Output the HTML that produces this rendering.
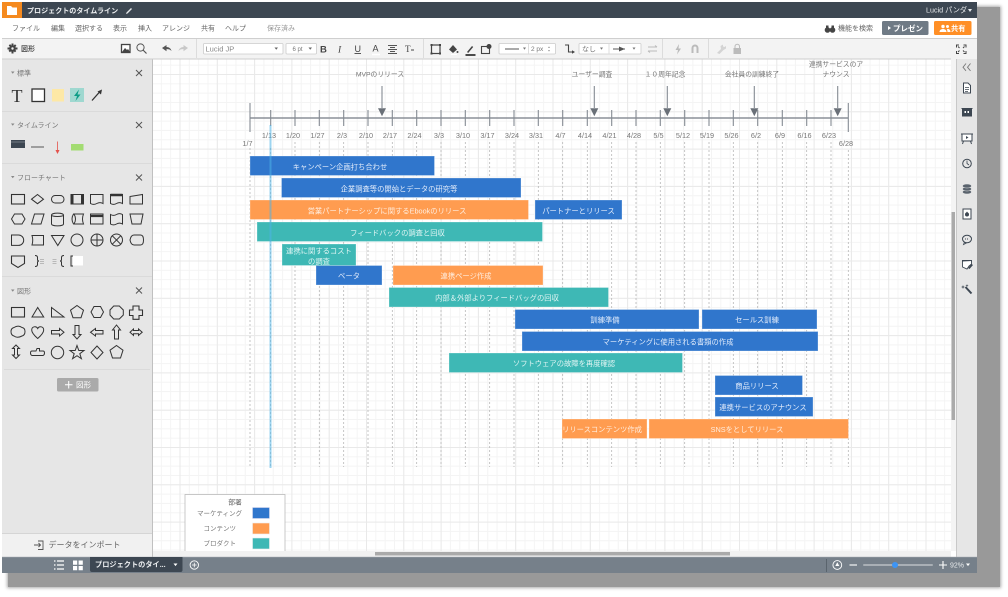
<!DOCTYPE html>
<html><head><meta charset="utf-8"><style>
html,body{margin:0;padding:0;background:#fff;width:1008px;height:597px;overflow:hidden}
#s{position:absolute;left:8px;top:7px;width:992px;height:580px;background:#999;box-shadow:0 0 3px 1px #aaa}
svg{position:absolute;left:0;top:0;filter:blur(.3px)}
text{font-family:"Liberation Sans","Noto Sans CJK JP",sans-serif;font-size:7.3px;fill:#777}
.ml{font-size:6.8px}
.m{font-size:7px;fill:#666}
.b text,.b{fill:#fff;text-anchor:middle;fill-opacity:.92}
.c{text-anchor:middle}
.h{font-size:7px;fill:#777}
.d{fill:none;stroke:#333;stroke-width:1}
.t{fill:none;stroke:#444;stroke-width:1.1}
.x{stroke:#555;stroke-width:1;fill:none}
</style></head><body>
<div id="s"></div>
<svg width="1008" height="597" viewBox="0 0 1008 597" xmlns="http://www.w3.org/2000/svg">
<defs>
<pattern id="mi" width="9.325" height="9.325" patternUnits="userSpaceOnUse" x="179.5" y="111.3"><path d="M.5 0V9.4M0 .5H9.4" stroke="#f4f4f4" stroke-width="1" fill="none"/></pattern>
<pattern id="ma" width="37.3" height="37.3" patternUnits="userSpaceOnUse" x="179.5" y="111.3"><path d="M.5 0V37.3M0 .5H37.3" stroke="#e9e9e9" stroke-width="1" fill="none"/></pattern>
</defs>
<rect x="2" y="2" width="975" height="571" fill="#fff"/>
<rect x="153" y="59" width="803" height="498" fill="url(#mi)"/>
<rect x="153" y="59" width="803" height="498" fill="url(#ma)"/>

<g stroke="#b2b2b2" stroke-width=".75" stroke-dasharray="2 2">
<path d="M250 148V467M270.7 148V467M295 142V467M319.3 142V467M343.7 142V467M368 142V467M392.3 142V467M416.7 142V467M441 142V467M465.3 142V467M489.7 142V467M514 142V467M538.3 142V467M562.7 142V467M587.3 142V467M611.7 142V467M636 142V467M660.3 142V467M684.7 142V467M709 142V467M733.3 142V467M757.7 142V467M782.3 142V467M806.7 142V467M831 142V467M848.3 150V467"/>
</g>

<g stroke="#858b93" stroke-width="1.1">
<path d="M250 118H848" stroke-width="1.5" stroke="#8b9098"/>
<path d="M250 103V132M848.3 103V132"/>
<path d="M270.7 110V126M295 110V126M319.3 110V126M343.7 110V126M368 110V126M392.3 110V126M416.7 110V126M441 110V126M465.3 110V126M489.7 110V126M514 110V126M538.3 110V126M562.7 110V126M587.3 110V126M611.7 110V126M636 110V126M660.3 110V126M684.7 110V126M709 110V126M733.3 110V126M757.7 110V126M782.3 110V126M806.7 110V126M831 110V126"/>
<path d="M382 86V108M594.3 86V108M667.3 86V108M754.3 86V108M837.7 86V108"/>
</g>
<g fill="#6a7078">
<path d="M378 108.300h8l-4 8z"/><path d="M590.300 108.300h8l-4 8z"/><path d="M663.300 108.300h8l-4 8z"/><path d="M750.300 108.300h8l-4 8z"/><path d="M833.700 108.300h8l-4 8z"/>
</g>
<g class="c" style="text-anchor:middle">
<text class="ml" x="380" y="76.500" text-anchor="middle">MVPのリリース</text>
<text class="ml" x="592" y="76.500" text-anchor="middle">ユーザー調査</text>
<text class="ml" x="665" y="76.500" text-anchor="middle">１０周年記念</text>
<text class="ml" x="752" y="76.500" text-anchor="middle">会社員の訓練終了</text>
<text class="ml" x="836" y="66.500" text-anchor="middle">連携サービスのア</text>
<text class="ml" x="836" y="76.500" text-anchor="middle">ナウンス</text>
<text x="247.500" y="146" text-anchor="middle">1/7</text>
<text x="269" y="138" text-anchor="middle">1/13</text>
<text x="293" y="138" text-anchor="middle">1/20</text>
<text x="317.500" y="138" text-anchor="middle">1/27</text>
<text x="342" y="138" text-anchor="middle">2/3</text>
<text x="366" y="138" text-anchor="middle">2/10</text>
<text x="390" y="138" text-anchor="middle">2/17</text>
<text x="414.500" y="138" text-anchor="middle">2/24</text>
<text x="439" y="138" text-anchor="middle">3/3</text>
<text x="463" y="138" text-anchor="middle">3/10</text>
<text x="487.500" y="138" text-anchor="middle">3/17</text>
<text x="512" y="138" text-anchor="middle">3/24</text>
<text x="536" y="138" text-anchor="middle">3/31</text>
<text x="560.500" y="138" text-anchor="middle">4/7</text>
<text x="585" y="138" text-anchor="middle">4/14</text>
<text x="609.500" y="138" text-anchor="middle">4/21</text>
<text x="634" y="138" text-anchor="middle">4/28</text>
<text x="658.500" y="138" text-anchor="middle">5/5</text>
<text x="683" y="138" text-anchor="middle">5/12</text>
<text x="707" y="138" text-anchor="middle">5/19</text>
<text x="731.500" y="138" text-anchor="middle">5/26</text>
<text x="756" y="138" text-anchor="middle">6/2</text>
<text x="780" y="138" text-anchor="middle">6/9</text>
<text x="804.500" y="138" text-anchor="middle">6/16</text>
<text x="829" y="138" text-anchor="middle">6/23</text>
<text x="846" y="146" text-anchor="middle">6/28</text>
</g>

<g stroke="#fff" stroke-opacity=".35" stroke-width=".8">
<g fill="#3076cc">
<rect x="250" y="156" width="184.500" height="19.500"/>
<rect x="281.500" y="178" width="239.500" height="19.500"/>
<rect x="535" y="200" width="87" height="19.500"/>
<rect x="316" y="265.500" width="66" height="19.500"/>
<rect x="515" y="309.500" width="184" height="19.500"/>
<rect x="702" y="309.500" width="115" height="19.500"/>
<rect x="522" y="331.500" width="296" height="19.500"/>
<rect x="715" y="375.500" width="87.500" height="19.500"/>
<rect x="715" y="397" width="98" height="19.500"/>
</g>
<g fill="#ff9c50">
<rect x="250" y="200" width="278.500" height="19.500"/>
<rect x="393" y="265.500" width="150" height="19.500"/>
<rect x="562" y="419" width="85" height="19.500"/>
<rect x="649" y="419" width="199.500" height="19.500"/>
</g>
<g fill="#3eb8b5">
<rect x="257" y="222" width="285.500" height="19.500"/>
<rect x="282" y="244" width="74" height="21.500"/>
<rect x="389" y="287.500" width="219.500" height="19.500"/>
<rect x="449" y="353" width="233.500" height="19.500"/>
</g>
</g>
<g class="b" fill="#fff">
<text x="340" y="169.500" text-anchor="middle" style="fill:#f2f6ff">キャンペーン企画打ち合わせ</text>
<text x="399" y="191.500" text-anchor="middle" style="fill:#f2f6ff">企業調査等の開始とデータの研究等</text>
<text x="387" y="213.500" text-anchor="middle" style="fill:#fff4ea">営業パートナーシップに関するEbookのリリース</text>
<text x="578.500" y="213.500" text-anchor="middle" style="fill:#f2f6ff">パートナーとリリース</text>
<text x="397.500" y="235.500" text-anchor="middle" style="fill:#eefaf9">フィードバックの調査と回収</text>
<text x="319" y="253.500" text-anchor="middle" style="fill:#eefaf9">連携に関するコスト</text>
<text x="319" y="264" text-anchor="middle" style="fill:#eefaf9">の調査</text>
<text x="349" y="278.500" text-anchor="middle" style="fill:#f2f6ff">ベータ</text>
<text x="466" y="278.500" text-anchor="middle" style="fill:#fff4ea">連携ページ作成</text>
<text x="497" y="300.500" text-anchor="middle" style="fill:#eefaf9">内部＆外部よりフィードバッグの回収</text>
<text x="605" y="322.500" text-anchor="middle" style="fill:#f2f6ff">訓練準備</text>
<text x="757" y="322.500" text-anchor="middle" style="fill:#f2f6ff">セールス訓練</text>
<text x="668" y="344.500" text-anchor="middle" style="fill:#f2f6ff">マーケティングに使用される書類の作成</text>
<text x="564" y="366" text-anchor="middle" style="fill:#eefaf9">ソフトウェアの故障を再度確認</text>
<text x="757" y="388.500" text-anchor="middle" style="fill:#f2f6ff">商品リリース</text>
<text x="763" y="410" text-anchor="middle" style="fill:#f2f6ff">連携サービスのアナウンス</text>
<text x="602" y="432" text-anchor="middle" style="fill:#fff4ea">リリースコンテンツ作成</text>
<text x="747" y="432" text-anchor="middle" style="fill:#fff4ea">SNSをとしてリリース</text>
</g>
<rect x="269.500" y="125" width="2" height="343" fill="#4db2e6" fill-opacity=".55"/>

<!-- legend -->
<rect x="185" y="494.500" width="100" height="70" fill="#fff" stroke="#bbb" stroke-width=".8"/>
<text x="235" y="504.500" text-anchor="middle" style="fill:#666;font-size:6.800px">部署</text>
<text x="242" y="515.500" text-anchor="end" style="font-size:6.500px">マーケティング</text>
<text x="236" y="530.500" text-anchor="end" style="font-size:6.500px">コンテンツ</text>
<text x="236" y="545.500" text-anchor="end" style="font-size:6.500px">プロダクト</text>
<rect x="252.500" y="507.500" width="17" height="11" fill="#3076cc" stroke="#dde" stroke-width=".6"/>
<rect x="252.500" y="523" width="17" height="11" fill="#ff9c50" stroke="#eee" stroke-width=".6"/>
<rect x="252.500" y="538" width="17" height="11" fill="#3eb8b5" stroke="#eee" stroke-width=".6"/>

<!-- scrollbars -->
<rect x="153" y="551" width="798" height="6" fill="#f1f1f1"/>
<rect x="375" y="552" width="355" height="3.500" fill="#aaa"/>
<rect x="951" y="59" width="5" height="498" fill="#f4f4f4"/>
<rect x="951.500" y="212" width="3.500" height="208" fill="#aaa"/>
<rect x="951" y="551" width="5" height="6" fill="#fff"/>

<!-- right panel -->
<rect x="956" y="59" width="21" height="498" fill="#e6e6e6"/>
<path d="M956.500 59V557" stroke="#c8c8c8"/>

<!-- left panel -->
<rect x="2" y="59" width="150.500" height="474" fill="#e6e6e6"/>
<rect x="2" y="533" width="150.500" height="24" fill="#f1f1f1"/>
<path d="M2 533.500H152.500" stroke="#d5d5d5"/>
<path d="M152.500 38V557" stroke="#c0c0c0"/>
<path d="M2 111.500H152M2 163.500H152M2 276.500H152M4 369.500H150" stroke="#dadada"/>

<!-- top bars -->
<rect x="2" y="2" width="975" height="16" fill="#3d4752"/>
<rect x="2" y="2" width="20" height="16" fill="#f58a1f"/>
<path d="M7 6h4l1.500 1.500H17v7.500H7z" fill="#fff"/>
<text x="27" y="12.800" style="fill:#eef0f2;font-size:7.050px;font-weight:700">プロジェクトのタイムライン</text>
<path d="M126.500 12.500l4.500-4.500 1 1-4.500 4.500-1.500.500z" fill="#e6e8ea"/>
<text x="926" y="12.500" style="fill:#e8eaec;font-size:7.200px">Lucid パンダ</text>
<path d="M968 9h4l-2 3z" fill="#e8eaec"/>

<rect x="2" y="18" width="975" height="20" fill="#fff"/>
<text class="m" x="12" y="30.500">ファイル</text>
<text class="m" x="51" y="30.500">編集</text>
<text class="m" x="75" y="30.500">選択する</text>
<text class="m" x="113" y="30.500">表示</text>
<text class="m" x="138" y="30.500">挿入</text>
<text class="m" x="162" y="30.500">アレンジ</text>
<text class="m" x="201" y="30.500">共有</text>
<text class="m" x="225" y="30.500">ヘルプ</text>
<text class="m" x="267" y="30.500" style="fill:#999">保存済み</text>
<!-- binoculars -->
<g fill="#444"><circle cx="827.500" cy="30" r="2.800"/><circle cx="832.500" cy="30" r="2.800"/><rect x="826" y="25.500" width="2.500" height="3"/><rect x="831.500" y="25.500" width="2.500" height="3"/></g>
<text class="m" x="838" y="30.500" style="fill:#666">機能を検索</text>
<rect x="882" y="21" width="46.500" height="14" rx="1.500" fill="#6f7a85"/>
<path d="M888 26l3 2-3 2z" fill="#fff"/>
<text x="893" y="31" style="fill:#fff;font-size:7.500px;font-weight:700">プレゼン</text>
<rect x="934" y="21" width="37.500" height="14" rx="1.500" fill="#ff8f26"/>
<g fill="#fff"><circle cx="943" cy="26.500" r="1.700"/><path d="M939.500 32c0-4 7-4 7 0z"/><circle cx="947.500" cy="26.500" r="1.500"/><path d="M947 29c2-.5 3.500 1 3.500 3h-3z"/></g>
<text x="951" y="31" style="fill:#fff;font-size:7.200px;font-weight:700">共有</text>

<!-- toolbar -->
<rect x="2" y="38" width="975" height="21" fill="#f3f3f3"/>
<path d="M2 38.500H977" stroke="#cfcfcf"/><path d="M2 59H951" stroke="#cdcdcd"/>
<path d="M196.500 39V58M423.500 39V58M662.500 39V58M708.500 39V58" stroke="#dcdcdc"/>
<!-- panel header -->
<g fill="#444"><circle cx="12.500" cy="48.500" r="3.300"/><path d="M11.500 43.500h2v10h-2zM7.500 47.500h10v2h-10z"/><path d="M8.700 45.500l1.400-1.400 6.200 6.900-1.400 1.400zM15 44.300l1.400 1.400-6.500 6.500-1.400-1.400z"/></g>
<circle cx="12.500" cy="48.500" r="1.200" fill="#f3f3f3"/>
<text x="21" y="51" style="fill:#555;font-size:7px;font-weight:700">図形</text>
<rect x="121.500" y="44.500" width="8.500" height="8" fill="#fff" stroke="#444" stroke-width="1.300"/>
<path d="M122 52l3-4 2 2 1-1 2 3z" fill="#444"/>
<circle cx="140.500" cy="47.500" r="3.600" fill="none" stroke="#555" stroke-width="1"/><path d="M143 50l3.500 3.500" stroke="#555" stroke-width="1.200"/>
<!-- undo redo -->
<path d="M162 48l4.500-3v2c2.500 0 4.500 1.500 5 4-1.500-1.500-3-2-5-1.800v2z" fill="#555"/>
<path d="M188 48l-4.500-3v2c-2.500 0-4.500 1.500-5 4 1.500-1.500 3-2 5-1.800v2z" fill="#c8c8c8"/>
<!-- font selects -->
<rect x="203.500" y="43.500" width="79.500" height="10.500" rx="1" fill="#fff" stroke="#ccc" stroke-width=".8"/>
<text x="205.500" y="51.500" style="fill:#888;font-size:7.500px">Lucid JP</text>
<path d="M274.500 47.500h3.500l-1.750 2.300z" fill="#666"/>
<rect x="286" y="43.500" width="30.500" height="10.500" rx="1" fill="#fff" stroke="#ccc" stroke-width=".8"/>
<text x="292.500" y="51" style="fill:#777;font-size:6px">6 pt</text>
<path d="M308.500 47.500h3.500l-1.750 2.300z" fill="#666"/>
<text x="320" y="52.500" style="fill:#444;font-size:9.500px;font-weight:700">B</text>
<text x="338" y="52.500" style="fill:#444;font-size:9.500px;font-family:'Liberation Serif',serif;font-style:italic">I</text>
<text x="354.500" y="52" style="fill:#444;font-size:9px;text-decoration:underline">U</text>
<text x="372.500" y="51.500" style="fill:#444;font-size:9px">A</text>
<path d="M372 54.500h8" stroke="#fff" stroke-width="1.500"/>
<path d="M388 45.500h9M390 47.500h5M388 49.500h9M390 51.500h5M388 53.500h9" stroke="#555" stroke-width=".9"/>
<text x="405" y="52" style="fill:#444;font-size:9px;font-family:'Liberation Serif',serif">T</text><path d="M411 50h3" stroke="#444"/>
<rect x="431.500" y="45" width="8.500" height="8.500" fill="none" stroke="#444" stroke-width="1.200"/>
<path d="M430.500 44h2v2h-2zM439 44h2v2h-2zM430.500 52.500h2v2h-2zM439 52.500h2v2h-2z" fill="#444"/>
<path d="M449 49.500l4-4.500 4 4.500-4 3.500z" fill="#444"/><circle cx="457.500" cy="52" r="1" fill="#444"/><path d="M451 54.500h6" stroke="#fff" stroke-width="1"/>
<path d="M467 52l5-6 1.200 1-5 6z" fill="#444"/><path d="M465.500 55h10" stroke="#111" stroke-width="1.500"/>
<rect x="481.500" y="46.500" width="8" height="7" fill="none" stroke="#444" stroke-width="1.100"/><circle cx="489" cy="46.500" r="2.500" fill="#444"/>
<rect x="499" y="43.500" width="56.500" height="10.500" rx="1" fill="#fff" stroke="#ccc" stroke-width=".8"/>
<path d="M505 49h14" stroke="#555" stroke-width="1"/>
<path d="M523 47.500h3l-1.500 2.300z" fill="#777"/>
<path d="M528.500 44V54" stroke="#ddd"/>
<text x="531" y="51" style="fill:#777;font-size:6.500px">2 px</text>
<path d="M549 46.500l1 1.300h-2zM549 51.500l1-1.300h-2z" fill="#777"/>
<path d="M565 45h3.500v7h4.500" fill="none" stroke="#444" stroke-width="1.100"/><path d="M572 50.300l3 1.700-3 1.700z" fill="#444"/>
<rect x="579" y="43.500" width="62" height="10.500" rx="1" fill="#fff" stroke="#ccc" stroke-width=".8"/>
<text x="582" y="51.500" style="fill:#777;font-size:7px">なし</text>
<path d="M600 47.500h3l-1.500 2.300z" fill="#777"/>
<path d="M609 44V54" stroke="#ddd"/>
<path d="M613 49h12" stroke="#555"/><path d="M619 46.500l6 2.500-6 2.500z" fill="#555"/>
<path d="M632.500 47.500h3l-1.500 2.300z" fill="#777"/>
<path d="M648 47h9m-2-1.500l2 1.500M657 51h-9m2 1.500l-2-1.500" fill="none" stroke="#bbb"/>
<path d="M679 44l-3.500 6h2.500l-1 4.500 4-6h-2.500z" fill="#bbb"/>
<path d="M691.500 53v-5a3.500 3.500 0 0 1 7 0v5h-2v-5a1.500 1.500 0 0 0-3 0v5z" fill="#bbb"/>
<path d="M717 53l4-4-.5-3 2.500-1.500 0 2 1.500.5 1.500-1 0 2.500-2.500 1.500-4 4z" fill="#d4d4d4"/>
<rect x="733.500" y="48" width="7.500" height="6" fill="#bbb"/><path d="M735 48v-1.500a2.200 2.200 0 0 1 4.500 0V48" fill="none" stroke="#bbb"/>
<path d="M956 44.500h3v1h-2v2h-1zM966.500 44.500v3h-1v-2h-2v-1zM956 54v-3h1v2h2v1zM966.500 54h-3v-1h2v-2h1z" fill="#444"/>
<path d="M958 46.500l1.500 1.500M964.500 46.500l-1.500 1.500M958 52l1.500-1.500M964.500 52l-1.500-1.500" stroke="#444"/>

<!-- left panel sections -->
<g fill="#888"><path d="M11 71.500h3.500l-1.750 2.300z"/><path d="M11 123.500h3.500l-1.750 2.300z"/><path d="M11 176h3.500l-1.750 2.300z"/><path d="M11 289.500h3.500l-1.750 2.300z"/></g>
<text class="h" x="17" y="75.500">標準</text>
<text class="h" x="17" y="127.500">タイムライン</text>
<text class="h" x="17" y="180">フローチャート</text>
<text class="h" x="17" y="293.500">図形</text>
<path d="M136 70l6 6m0-6l-6 6M136 122l6 6m0-6l-6 6M136 174.500l6 6m0-6l-6 6M136 287.500l6 6m0-6l-6 6" stroke="#555" stroke-width="1"/>

<!-- standard -->
<text x="11.500" y="102" style="font-family:'Liberation Serif',serif;font-size:18px;fill:#333">T</text>
<rect x="32" y="89" width="12.500" height="12.500" fill="#fff" stroke="#333" stroke-width="1.300"/>
<rect x="52" y="89" width="12" height="12.500" fill="#fde8a6"/>
<rect x="70" y="88" width="14" height="14" fill="#9fd8d0"/>
<path d="M79 89.500l-5 6.500h3l-1.500 5 5-6.500h-3z" fill="#0d9c86"/>
<path d="M92 100.500l8-9" stroke="#333" stroke-width="1.300"/><path d="M102 89.500l-1 5-3.500-3z" fill="#333"/>
<!-- timeline -->
<rect x="11" y="140" width="14" height="8" fill="#3d4752"/><path d="M11 142h14" stroke="#8a929b" stroke-width=".7"/>
<path d="M31 147h13" stroke="#555" stroke-width="1"/>
<path d="M57.500 141.500V152" stroke="#e4524c" stroke-width=".8"/><path d="M55.500 150h4l-2 4z" fill="#e4524c"/>
<rect x="71" y="144" width="12.500" height="6.500" fill="#a3dc72"/>

<!-- flowchart -->
<g class="d">
<rect x="11.500" y="194.500" width="13" height="9.500" stroke-width="1.100"/>
<path d="M31.500 199.200l6-4.700 6 4.700-6 4.500z"/>
<rect x="51.500" y="195.500" width="12.500" height="7.500" rx="3.700"/>
<rect x="71" y="194.500" width="12.500" height="9.500"/><path d="M72.500 194.500v9.500M82 194.500v9.500" stroke-width="2"/>
<path d="M90.500 194.500h12.500v9q-3-1.800-6.200 0t-6.300 0z"/>
<path d="M110.500 194.500h12v9q-3-1.800-6 0t-6 0z"/><path d="M110.500 195h12" stroke-width="2.500"/>
<path d="M130 196.500l12.500-2v9.500H130z"/>
<path d="M11.500 219l3-5h7.500l3 5-3 5h-7.500z"/>
<path d="M31.500 224l3-10h9.500l-3 10z"/>
<path d="M51.500 215c0-2.500 12-2.500 12 0v9c0 2.500-12 2.500-12 0zM51.500 215c0 2 12 2 12 0"/>
<path d="M73.500 214h10q-2 5 0 10h-10q-3-5 0-10zM74 214q3 5 0 10" />
<rect x="90.500" y="214" width="12.500" height="10"/><path d="M90.500 216h12.500" stroke-width="2.200"/>
<path d="M110.500 214.500q3 1.800 6 0t6 0v9.500q-3-1.800-6 0t-6 0z"/>
<path d="M130 214h13l-2 10h-9z"/>
<path d="M11.500 235h7a5.200 5.200 0 0 1 0 10.400h-7z"/>
<path d="M32 235.500h11.500v9.500H32q1.500-5 0-9.500z"/>
<path d="M51.500 235.500h12.500l-6.200 10z"/>
<circle cx="77" cy="240" r="6"/>
<circle cx="97" cy="240" r="6"/><path d="M97 234v12M91 240h12"/>
<circle cx="116.500" cy="240" r="6"/><path d="M112.300 235.800l8.400 8.400M120.700 235.800l-8.400 8.400"/>
<path d="M130 240q1-5 4-5h6.500q3 0 3 5t-3 5H134q-3 0-4-5z"/>
<path d="M11.500 256h13v7.500l-6.500 4-6.500-4z" stroke-width="1.100"/>
<path d="M35 255.500q2.500 0 2.500 2v2q0 1.500 1.500 1.500-1.500 0-1.500 1.500v2q0 2-2.500 2"/>
<path d="M64 255.500q-2.500 0-2.500 2v2q0 1.500-1.500 1.500 1.500 0 1.500 1.500v2q0 2 2.500 2"/>
<path d="M73 256h-2v10h2"/>
</g>
<path d="M40 259.500h4M40 261.500h4M40 263.500h4M52.500 259.500h4M52.500 261.500h4M52.500 263.500h4" stroke="#aaa" stroke-width=".8"/>
<rect x="73" y="256" width="10" height="9.500" fill="#fff"/>

<!-- shapes -->
<g class="d">
<rect x="11.500" y="307.500" width="13" height="9.500" stroke-width="1.100"/>
<path d="M32 317l5.700-9.500 6 9.500z"/>
<path d="M51.500 307.500v9.500h12.500z"/>
<path d="M77 305.500l6.500 4.700-2.500 7.500h-8l-2.500-7.500z"/>
<path d="M91 312l3-5.500h6.500l3 5.500-3 5.500H94z"/>
<path d="M113.700 306h5.600l4 4v5l-4 4h-5.600l-3.700-4v-5z"/>
<path d="M133 306h6v4h3.500v5.500H139v3.800h-6v-3.800h-3.500V310h3.500z" stroke-width="1.100"/>
<path d="M14 327.500c3-2 6-1.500 8 0 2 .3 3 2 3 4s-1 4-3 4.500c-3 1.500-6 1.500-8 0-2-.5-3-2.500-3-4.500s1-3.500 3-4z"/>
<path d="M37.700 338.500c-4-3.500-6-6-6-8.500 0-3.500 4.500-4.500 6-1.500 1.500-3 6-2 6 1.500 0 2.500-2 5-6 8.500z"/>
<path d="M51.500 330.500h8v-2l4.500 3.800-4.500 3.700v-2h-8z"/>
<path d="M75 325.500h4v9h2l-4 4.500-4-4.500h2z"/>
<path d="M103 330.500h-7.500v-2l-5 3.800 5 3.700v-2h7.500z"/>
<path d="M114.500 339v-9h-2l4-5 4 5h-2v9z"/>
<path d="M133.500 329v1.500h5V329l3.700 3.200-3.700 3.200v-1.700h-5v1.700l-3.500-3.200z"/>
<path d="M16 345l3.500 3.500h-2v6.500h2L16 358.500 12.500 355h2v-6.500h-2z"/>
<path d="M32 351h4l1-2.500h2.500v2.500h3.500q1.500 0 1.500 2t-1.500 2.500H32q-1.500-.5-1.500-2.500t1.500-2z"/>
<circle cx="57.500" cy="352.500" r="6.200"/>
<path d="M77 345.500l1.800 5h5.200l-4.200 3.200 1.600 5-4.400-3-4.400 3 1.600-5-4.200-3.200h5.200z"/>
<path d="M97 346l6 6.500-6 6.500-6-6.500z"/>
<path d="M116.500 345.500l6.500 4.700-2.500 7.800h-8l-2.500-7.800z"/>
</g>
<rect x="57" y="378" width="41.500" height="13.500" rx="1.500" fill="#aaa"/>
<path d="M65 384.700h7.500M68.700 381v7.500" stroke="#fff" stroke-width="1"/>
<text x="76" y="387.500" style="fill:#fff;font-size:7.500px">図形</text>

<!-- import -->
<path d="M34 545h6.500m-2-2l2 2-2 2M38 541h5v8.500h-5" fill="none" stroke="#555" stroke-width=".9"/>
<text x="48.500" y="547.500" style="fill:#666;font-size:8px">データをインポート</text>

<!-- right icons -->
<path d="M966 63.500l-3 3.700 3 3.700M970.500 63.500l-3 3.700 3 3.700" fill="none" stroke="#777" stroke-width=".9"/>
<path d="M963.500 83h4.500l2.500 2.500v7.500h-7z" fill="#fff" stroke="#3d4752" stroke-width="1"/><path d="M965 87.500h4M965 89.500h4M965 91.500h3" stroke="#3d4752" stroke-width=".7"/>
<rect x="962" y="109" width="10" height="7.500" fill="#3d4752"/><path d="M961.500 108.500h11" stroke="#3d4752"/><path d="M964.500 111h1.500v2h-1.500zM967.500 111h1.500v2h-1.500z" fill="#fff"/>
<rect x="962" y="134" width="10" height="7" fill="#fff" stroke="#3d4752"/><path d="M966 136l2.500 1.500-2.500 1.500z" fill="#3d4752"/><path d="M963.500 141l-1 3M970.500 141l1 3M961 134h12" stroke="#3d4752"/>
<circle cx="967" cy="163.500" r="4.300" fill="none" stroke="#3d4752"/><path d="M967 160.500v3l2 1.500" fill="none" stroke="#3d4752" stroke-width=".8"/>
<g fill="#5a636d" stroke="#e6e6e6" stroke-width=".5"><ellipse cx="967" cy="192" rx="4.500" ry="2"/><ellipse cx="967" cy="189" rx="4.500" ry="2"/><ellipse cx="967" cy="186" rx="4.500" ry="2"/></g>
<rect x="963" y="209" width="8" height="10" fill="#fff" stroke="#3d4752"/><circle cx="967" cy="214.500" r="2" fill="#3d4752"/><path d="M967 211.500l-1.500 2h3z" fill="#3d4752"/>
<ellipse cx="967" cy="239" rx="4.500" ry="3.800" fill="none" stroke="#3d4752"/><path d="M964.500 242l-1 2.500 3-1.500" fill="none" stroke="#3d4752" stroke-width=".8"/><path d="M965 239h4" stroke="#3d4752" stroke-dasharray="1 1"/>
<path d="M962 260h10v2h-10z" fill="#3d4752"/><path d="M962.500 261.500v5.500l4.500 2 2-3 2.500-2v-3" fill="#fff" stroke="#3d4752" stroke-width=".9"/><path d="M968 268l3.500-4 1.500 1-3.500 4z" fill="#3d4752"/>
<path d="M965.500 287l6 6.500" stroke="#3d4752" stroke-width="2"/><path d="M963 285l.500 1.500 1.500.5-1.500.5-.5 1.500-.5-1.500-1.500-.5 1.500-.5zM967 284l.4 1.200 1.200.4-1.200.4-.4 1.200-.4-1.200-1.200-.4 1.200-.4z" fill="#3d4752"/>

<!-- bottom bar -->
<rect x="2" y="557" width="975" height="16" fill="#76808a"/>
<path d="M2 557H977" stroke="#aab0b6" stroke-width=".6"/>
<path d="M54 561h1.500M57 561h7M54 565h1.500M57 565h7M54 569h1.500M57 569h7" stroke="#fff" stroke-width="1.200"/>
<path d="M73 560.500h4.200v4.200H73zM78.600 560.500h4.200v4.200h-4.200zM73 566h4.200v4.200H73zM78.600 566h4.200v4.200h-4.200z" fill="#fff"/>
<path d="M90 557h92.500v13q0 2-2 2H92q-2 0-2-2z" fill="#3d4752"/>
<text x="95" y="567" style="fill:#eef0f2;font-size:7.200px;font-weight:700">プロジェクトのタイ...</text>
<path d="M173.500 563.500h4l-2 2.600z" fill="#fff"/>
<circle cx="194.300" cy="565" r="4.200" fill="none" stroke="#fff" stroke-width=".9"/><path d="M192 565h4.600M194.300 562.700v4.600" stroke="#fff" stroke-width=".8"/>
<path d="M826.500 559v13" stroke="#5a646d"/>
<circle cx="837.300" cy="565" r="4.400" fill="none" stroke="#fff" stroke-width=".9"/><path d="M837.300 562.300l2 3.700h-4z" fill="#fff"/>
<path d="M849.500 565h7.500" stroke="#fff" stroke-width="1.100"/>
<rect x="863" y="564" width="70" height="2" rx="1" fill="#a9afb5"/>
<circle cx="895" cy="565" r="3" fill="#3d95f5"/>
<path d="M939 565h8M943 561v8" stroke="#fff" stroke-width="1.100"/>
<text x="950" y="567.500" style="fill:#e8eaec;font-size:7px">92%</text>
<path d="M966 563.500h4l-2 2.600z" fill="#fff"/>
</svg>
</body></html>
